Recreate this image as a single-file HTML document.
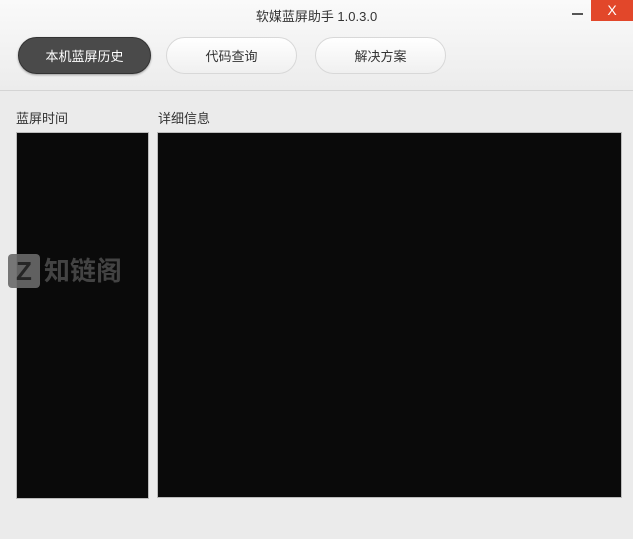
<!DOCTYPE html><html><head><meta charset="utf-8"><style>
body{margin:0;width:633px;height:539px;overflow:hidden;background:#ebebeb;font-family:"Liberation Sans","Noto Sans CJK SC",sans-serif;position:relative}
.hdr{position:absolute;left:0;top:0;width:633px;height:90px;background:linear-gradient(#fafafa,#ececec);border-bottom:1px solid #d4d4d4}
.title{position:absolute;top:6px;left:0;width:633px;text-align:center;font-size:13px;color:#333}
.min{position:absolute;left:572px;top:13px;width:11px;height:2px;background:#555}
.close{position:absolute;left:591px;top:0;width:42px;height:21px;background:#e2472a;color:#fff;text-align:center;font-size:14px;line-height:20px}
.btn{position:absolute;top:37px;height:37px;border-radius:19px;text-align:center;line-height:37px;font-size:13px;color:#333;background:linear-gradient(#fff,#f0f0f0);border:1px solid #d8d8d8;box-sizing:border-box}
.btn.on{background:#4a4a4a;color:#fff;border-color:#333;box-shadow:0 1px 2px #999}
.lbl{position:absolute;top:108px;font-size:13px;color:#333}
.box{position:absolute;top:132px;background:#0a0a0a;border:1px solid #bbb}
.wm{position:absolute;left:8px;top:251px;color:#4a4a4a;font-size:26px;font-weight:bold;opacity:.9}
.wm span{display:inline-block;width:32px;height:34px;background:#6a6a6a;color:#2a2a2a;text-align:center;line-height:34px;border-radius:4px;margin-right:4px}
</style></head><body>
<div class="hdr"></div>
<div class="title">软媒蓝屏助手 1.0.3.0</div>
<div class="min"></div><div class="close">X</div>
<div class="btn on" style="left:18px;width:133px">本机蓝屏历史</div>
<div class="btn" style="left:166px;width:131px">代码查询</div>
<div class="btn" style="left:315px;width:131px">解决方案</div>
<div class="lbl" style="left:16px">蓝屏时间</div>
<div class="lbl" style="left:158px">详细信息</div>
<div class="box" style="left:16px;width:131px;height:365px"></div>
<div class="box" style="left:157px;width:463px;height:364px"></div>
<div class="wm"><span>Z</span>知链阁</div>
</body></html>
